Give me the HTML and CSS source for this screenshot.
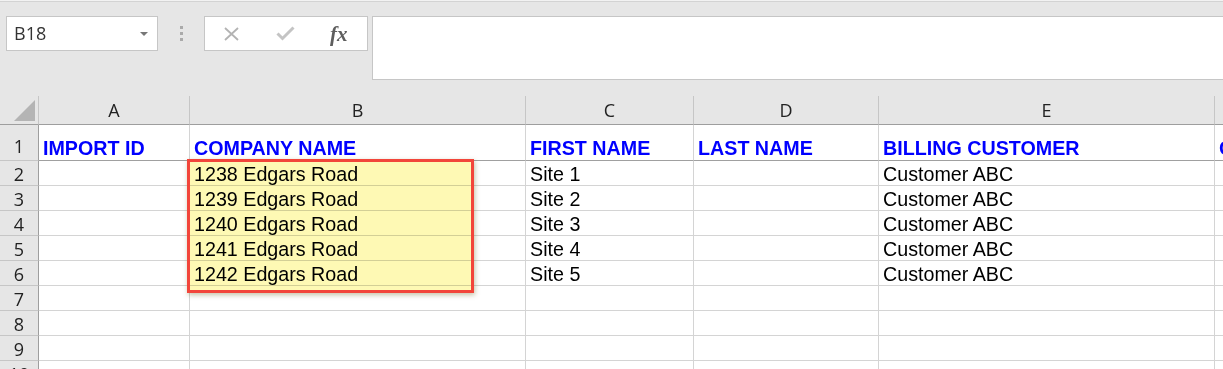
FILE: index.html
```html
<!DOCTYPE html>
<html>
<head>
<meta charset="utf-8">
<link rel="stylesheet" href="styles.css">
</head>
<body>
<div class="app">
  <div class="toolbar">
    <div class="namebox">
      <span class="ref">B18</span>
      <span class="caret"></span>
    </div>
    <div class="grip"><i></i><i></i><i></i></div>
    <div class="fxbtns">
      <svg class="ico-x" width="17" height="14" viewBox="0 0 17 14"><path d="M2 1 L15 13 M15 1 L2 13" stroke="#b3b3b3" stroke-width="1.8" fill="none"/></svg>
      <svg class="ico-check" width="19" height="15" viewBox="0 0 19 15"><path d="M1.5 7.5 L6.5 12.5 L17.5 1.5" stroke="#c4c4c4" stroke-width="3" fill="none"/></svg>
      <span class="fx">fx</span>
    </div>
    <div class="formula"></div>
  </div>

  <div class="sheet">
    <div class="corner"><span class="tri"></span></div>
    <div class="ch">A</div><div class="ch">B</div><div class="ch">C</div><div class="ch">D</div><div class="ch">E</div><div class="ch last">F</div>

    <div class="rh r1">1</div>
    <div class="c r1 h">IMPORT ID</div><div class="c r1 h">COMPANY NAME</div><div class="c r1 h">FIRST NAME</div><div class="c r1 h">LAST NAME</div><div class="c r1 h">BILLING CUSTOMER</div><div class="c r1 h last">CONTACT EMAIL</div>

    <div class="rh">2</div>
    <div class="c"></div><div class="c">1238 Edgars Road</div><div class="c">Site 1</div><div class="c"></div><div class="c">Customer ABC</div><div class="c last"></div>

    <div class="rh">3</div>
    <div class="c"></div><div class="c">1239 Edgars Road</div><div class="c">Site 2</div><div class="c"></div><div class="c">Customer ABC</div><div class="c last"></div>

    <div class="rh">4</div>
    <div class="c"></div><div class="c">1240 Edgars Road</div><div class="c">Site 3</div><div class="c"></div><div class="c">Customer ABC</div><div class="c last"></div>

    <div class="rh">5</div>
    <div class="c"></div><div class="c">1241 Edgars Road</div><div class="c">Site 4</div><div class="c"></div><div class="c">Customer ABC</div><div class="c last"></div>

    <div class="rh">6</div>
    <div class="c"></div><div class="c">1242 Edgars Road</div><div class="c">Site 5</div><div class="c"></div><div class="c">Customer ABC</div><div class="c last"></div>

    <div class="rh">7</div>
    <div class="c"></div><div class="c"></div><div class="c"></div><div class="c"></div><div class="c"></div><div class="c last"></div>

    <div class="rh">8</div>
    <div class="c"></div><div class="c"></div><div class="c"></div><div class="c"></div><div class="c"></div><div class="c last"></div>

    <div class="rh">9</div>
    <div class="c"></div><div class="c"></div><div class="c"></div><div class="c"></div><div class="c"></div><div class="c last"></div>

    <div class="rh">10</div>
    <div class="c"></div><div class="c"></div><div class="c"></div><div class="c"></div><div class="c"></div><div class="c last"></div>

    <div class="selection"><span class="fill"></span></div>
  </div>
</div>
</body>
</html>
```

FILE: styles.css
```css
html, body {
  margin: 0;
  padding: 0;
  overflow: hidden;
  background: #e6e6e6;
}

.app {
  width: 1223px;
  height: 369px;
  overflow: hidden;
}

.toolbar {
  box-sizing: border-box;
  height: 96px;
  border-top: 1px solid #f2f2f2;
  padding-top: 15px;
  display: flex;
  align-items: flex-start;
  background: #e6e6e6;
  position: relative;
}
.toolbar::before {
  content: "";
  position: absolute;
  left: 0; right: 0; top: 0;
  height: 1px;
  background: #d3d3d3;
}

.namebox {
  box-sizing: border-box;
  margin-left: 6px;
  width: 152px;
  height: 35px;
  background: #fff;
  border: 1px solid #c6c6c6;
  display: flex;
  align-items: center;
  justify-content: space-between;
  padding: 0 9px 0 7px;
}
.ref {
  font-family: "Open Sans", "Noto Sans", sans-serif;
  font-size: 18px;
  color: #333;
  line-height: 1;
  padding-bottom: 1px;
}
.caret {
  width: 0;
  height: 0;
  border-left: 4px solid transparent;
  border-right: 4px solid transparent;
  border-top: 4px solid #777;
  margin-top: 1px;
}

.grip {
  width: 46px;
  height: 35px;
  display: flex;
  flex-direction: column;
  align-items: center;
  justify-content: center;
  gap: 3px;
}
.grip i {
  display: block;
  width: 3px;
  height: 3px;
  background: #aaa;
}

.fxbtns {
  box-sizing: border-box;
  width: 164px;
  height: 35px;
  background: #fff;
  border: 1px solid #c6c6c6;
  display: flex;
  align-items: center;
  padding-left: 18px;
  gap: 36px;
}
.ico-x, .ico-check { display: block; }
.fx {
  font-family: "Liberation Serif", "DejaVu Serif", serif;
  font-style: italic;
  font-weight: bold;
  font-size: 21px;
  color: #5e5e5e;
  line-height: 1;
  margin-left: -1px;
  padding-top: 2px;
}

.formula {
  box-sizing: border-box;
  flex: 1;
  margin-left: 4px;
  margin-right: -3px;
  height: 64px;
  background: #fff;
  border: 1px solid #c6c6c6;
}

.sheet {
  position: relative;
  display: grid;
  width: 1551px;
  grid-template-columns: 39px 151px 336px 168px 185px 336px 336px;
  grid-template-rows: 29px 36px repeat(9, 25px);
  background: #fff;
}

.sheet > div {
  box-sizing: border-box;
  overflow: hidden;
  white-space: nowrap;
}

.corner {
  background: #e6e6e6;
  border-right: 1px solid #c6c6c6;
  border-bottom: 1px solid #9e9e9e;
  position: relative;
}
.tri {
  position: absolute;
  right: 3px;
  bottom: 3px;
  width: 21px;
  height: 21px;
  background: #b4b4b4;
  clip-path: polygon(100% 0, 100% 100%, 0 100%);
}

.ch {
  background: #e6e6e6;
  border-right: 1px solid #c6c6c6;
  border-bottom: 1px solid #9e9e9e;
  display: flex;
  align-items: flex-end;
  justify-content: center;
  font-family: "Open Sans", "Noto Sans", sans-serif;
  font-size: 18px;
  line-height: 20px;
  color: #222;
  padding-bottom: 4px;
}

.rh {
  background: #e6e6e6;
  border-right: 1px solid #9e9e9e;
  border-bottom: 1px solid #c6c6c6;
  display: flex;
  align-items: flex-end;
  justify-content: center;
  font-family: "Open Sans", "Noto Sans", sans-serif;
  font-size: 18px;
  line-height: 20px;
  color: #222;
  padding-bottom: 1px;
}
.rh.r1 { padding-bottom: 4px; }

.c {
  border-right: 1px solid #d4d4d4;
  border-bottom: 1px solid #d4d4d4;
  display: flex;
  align-items: flex-end;
  padding-left: 4px;
  font-family: "Liberation Sans", Arial, sans-serif;
  font-size: 19.7px;
  line-height: 22px;
  color: #000;
}
.c.r1 {
  border-bottom-color: #a0a0a0;
  padding-bottom: 1px;
}
.h {
  color: #0000ff;
  font-weight: bold;
}
.last { border-right: none; }

.sheet > .selection {
  position: absolute;
  left: 187px;
  top: 63px;
  width: 287px;
  height: 134px;
  box-sizing: border-box;
  border: 3px solid #f2453a;
  box-shadow: 1px 2px 5px rgba(90, 80, 0, 0.35);
  overflow: visible;
}
.fill {
  position: absolute;
  inset: 0;
  background: #fef9b4;
  mix-blend-mode: multiply;
}
```
